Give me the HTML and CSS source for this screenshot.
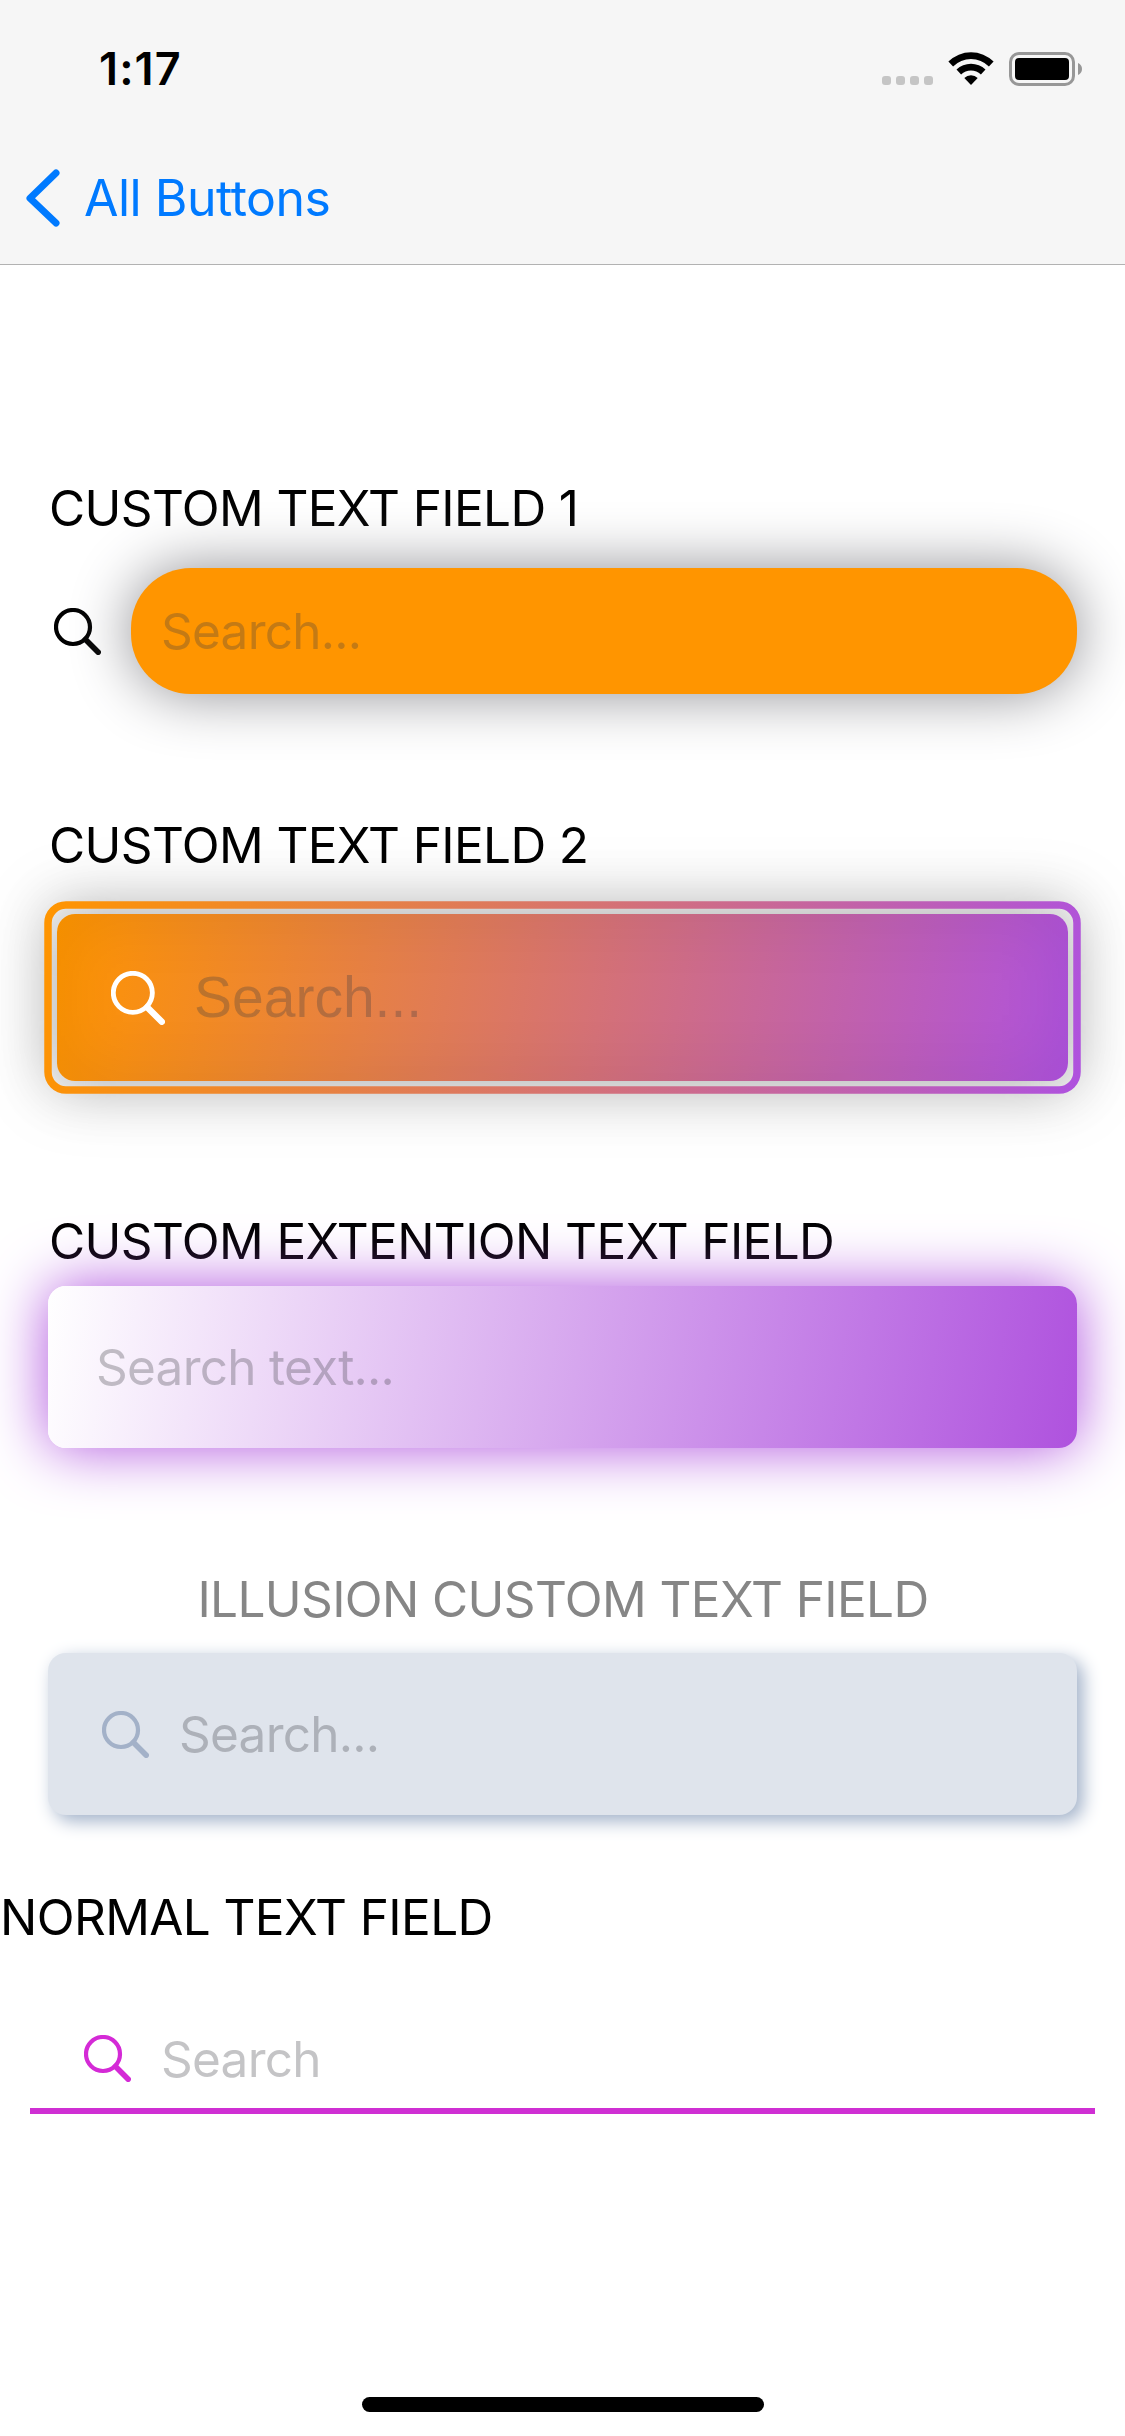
FILE: index.html
```html
<!DOCTYPE html>
<html lang="en">
<head>
<meta charset="utf-8">
<title>Text Fields</title>
<link rel="stylesheet" href="styles.css">
</head>
<body>
<svg class="defs" width="0" height="0" aria-hidden="true">
  <symbol id="search" viewBox="0 0 47 47">
    <circle cx="19" cy="19" r="17" fill="none" stroke="currentColor" stroke-width="4.200"/>
    <path d="M31.5 31.5L44.2 44.2" fill="none" stroke="currentColor" stroke-width="5.600" stroke-linecap="round"/>
  </symbol>
</svg>
<div class="screen">
  <header class="header">
    <div class="status">
      <span class="time">1:17</span>
      <div class="indicators">
        <div class="dots"><i></i><i></i><i></i><i></i></div>
        <svg class="wifi" width="46" height="34" viewBox="0 0 46 34">
          <path d="M0.4 9.600a32 32 0 0 1 45.200 0l-4.700 4.800a25.600 25.600 0 0 0-35.800 0z"/>
          <path d="M8.500 17.600a20.800 20.800 0 0 1 29 0l-4.600 4.900a14.300 14.300 0 0 0-19.800 0z"/>
          <path d="M16.300 26a9.800 9.800 0 0 1 13.400 0L23 33z"/>
        </svg>
        <svg class="battery" width="73" height="34" viewBox="0 0 73 34">
          <rect x="1.5" y="1.5" width="63" height="31" rx="8.5" fill="none" stroke="#979797" stroke-width="3"/>
          <rect x="6" y="6" width="54" height="22" rx="4"/>
          <path d="M69 11c2.600 1 4 3.400 4 6s-1.400 5-4 6z" fill="#979797"/>
        </svg>
      </div>
    </div>
    <nav class="nav">
      <svg class="chevron" width="34" height="58" viewBox="0 0 34 58"><path d="M30 4L4 29.300L30 54" fill="none" stroke="currentColor" stroke-width="7" stroke-linecap="round" stroke-linejoin="round"/></svg>
      <span class="back">All Buttons</span>
    </nav>
  </header>

  <main class="content">
    <section class="group group-pill">
      <h2 class="label">CUSTOM TEXT FIELD 1</h2>
      <div class="row">
        <svg class="icon"><use href="#search"/></svg>
        <div class="field pill"><span class="placeholder">Search...</span></div>
      </div>
    </section>

    <section class="group group-bordered">
      <h2 class="label">CUSTOM TEXT FIELD 2</h2>
      <div class="field bordered">
        <svg class="ring" width="1029" height="185" viewBox="0 0 1029 185">
          <defs>
            <linearGradient id="edge" gradientUnits="userSpaceOnUse" x1="0" y1="0" x2="1029" y2="185">
              <stop offset="0" stop-color="#ff9500"/><stop offset="1" stop-color="#af52de"/>
            </linearGradient>
          </defs>
          <rect width="1029" height="185" rx="18" fill="none" stroke="url(#edge)" stroke-width="7.5"/>
        </svg>
        <div class="fill">
          <svg class="icon icon-large"><use href="#search"/></svg>
          <span class="placeholder placeholder-large">Search...</span>
        </div>
      </div>
    </section>

    <section class="group group-gradient">
      <h2 class="label">CUSTOM EXTENTION TEXT FIELD</h2>
      <div class="field gradient"><span class="placeholder">Search text...</span></div>
    </section>

    <section class="group group-illusion">
      <h2 class="label label-muted">ILLUSION CUSTOM TEXT FIELD</h2>
      <div class="field illusion">
        <svg class="icon"><use href="#search"/></svg>
        <span class="placeholder">Search...</span>
      </div>
    </section>

    <section class="group-normal">
      <h2 class="label">NORMAL TEXT FIELD</h2>
      <div class="underlined">
        <svg class="icon"><use href="#search"/></svg>
        <span class="placeholder">Search</span>
      </div>
    </section>
  </main>
  <div class="home-indicator"></div>
</div>
</body>
</html>
```
FILE: styles.css
```css
* { box-sizing: border-box; }

body {
  margin: 0;
  background: #fff;
  font-family: Inter, "Liberation Sans", sans-serif;
  color: #000;
}

.defs { position: absolute; }

.screen {
  width: 1125px;
  height: 2436px;
  display: flex;
  flex-direction: column;
  overflow: hidden;
  background: #fff;
}

/* Status bar and navigation */
.header {
  height: 265px;
  flex: none;
  background: #f6f6f6;
  border-bottom: 1px solid #b2b2b2;
}

.status {
  height: 132px;
  padding: 0 43px 0 99px;
  display: flex;
  justify-content: space-between;
}

.time {
  margin-top: 39px;
  font-size: 45px;
  line-height: 60px;
  font-weight: 600;
  letter-spacing: 1.1px;
}

.indicators {
  height: 34px;
  margin-top: 52px;
  display: flex;
}

.dots {
  display: flex;
  gap: 5px;
  margin: 24px 15px 0 0;
}

.dots i {
  width: 9px;
  height: 9px;
  border-radius: 3px;
  background: #c5c5c5;
}

.wifi { margin-right: 15px; }

.nav {
  height: 132px;
  padding-left: 26px;
  display: flex;
  align-items: center;
  color: #007aff;
}

.chevron { margin-right: 24px; }

.back {
  font-size: 50px;
  line-height: 60px;
  letter-spacing: -0.5px;
}

/* Groups */
.content {
  flex: 1;
  padding-top: 213px;
}

.group { padding: 0 48px; }

.label {
  margin: 0;
  font-size: 49.5px;
  line-height: 60px;
  font-weight: 400;
  letter-spacing: -0.62px;
  white-space: nowrap;
}

.group .label { padding-left: 1px; }

.field {
  position: relative;
  display: flex;
  align-items: center;
}

.icon {
  width: 47px;
  height: 47px;
  flex: none;
}

.placeholder {
  font-size: 49.5px;
  line-height: 60px;
  letter-spacing: -0.75px;
  color: rgba(60, 60, 67, 0.3);
  white-space: nowrap;
}

.row {
  margin-top: 30px;
  padding-left: 6px;
  display: flex;
  align-items: center;
  gap: 30px;
}

.pill {
  flex: 1;
  height: 126px;
  padding-left: 30px;
  border-radius: 60px;
  background: #ff9500;
  box-shadow: 0 0 60px #8e8e93;
}

.group-bordered { padding-top: 121px; }

.bordered {
  height: 185px;
  margin-top: 30px;
  padding: 9px;
}

.ring {
  position: absolute;
  z-index: 1;
  top: 0;
  left: 0;
  overflow: visible;
  filter: drop-shadow(0 0 30px rgba(0, 0, 0, 0.33));
}

.fill {
  width: 100%;
  height: 167px;
  padding-left: 54px;
  display: flex;
  align-items: center;
  gap: 29px;
  border-radius: 18px;
  background: linear-gradient(99.4deg, #ff9500, #af52de);
  box-shadow: 0 0 60px rgba(0, 0, 0, 0.33);
}

.icon-large {
  width: 54px;
  height: 54px;
  color: #fff;
}

.placeholder-large {
  padding-bottom: 2px;
  font-family: "Liberation Sans", Arial, sans-serif;
  font-size: 57px;
  letter-spacing: 0;
}

.group-gradient { padding-top: 121px; }

.gradient {
  height: 162px;
  margin-top: 15px;
  padding-left: 48px;
  border-radius: 18px;
  background: linear-gradient(98.9deg, #fff, #af52de);
  box-shadow: 0 0 60px #af52de;
}

.group-illusion { padding-top: 121px; }

.label-muted {
  color: #868686;
  text-align: center;
}

.illusion {
  height: 162px;
  margin-top: 24px;
  padding-left: 54px;
  gap: 30px;
  border-radius: 18px;
  background: #dfe4ec;
  box-shadow: 6px 6px 18px #a0b0c8;
}

.illusion .icon { color: #a3b1c8; }

.group-normal { padding-top: 72px; }

.underlined {
  height: 110px;
  margin: 57px 30px 0;
  padding: 5px 0 0 54px;
  display: flex;
  align-items: center;
  gap: 30px;
  border-bottom: 6px solid #cf2fd3;
}

.underlined .icon { color: #d42ad6; }

.home-indicator {
  width: 402px;
  height: 15px;
  margin: 0 auto 24px;
  border-radius: 8px;
  background: #000;
}
```
